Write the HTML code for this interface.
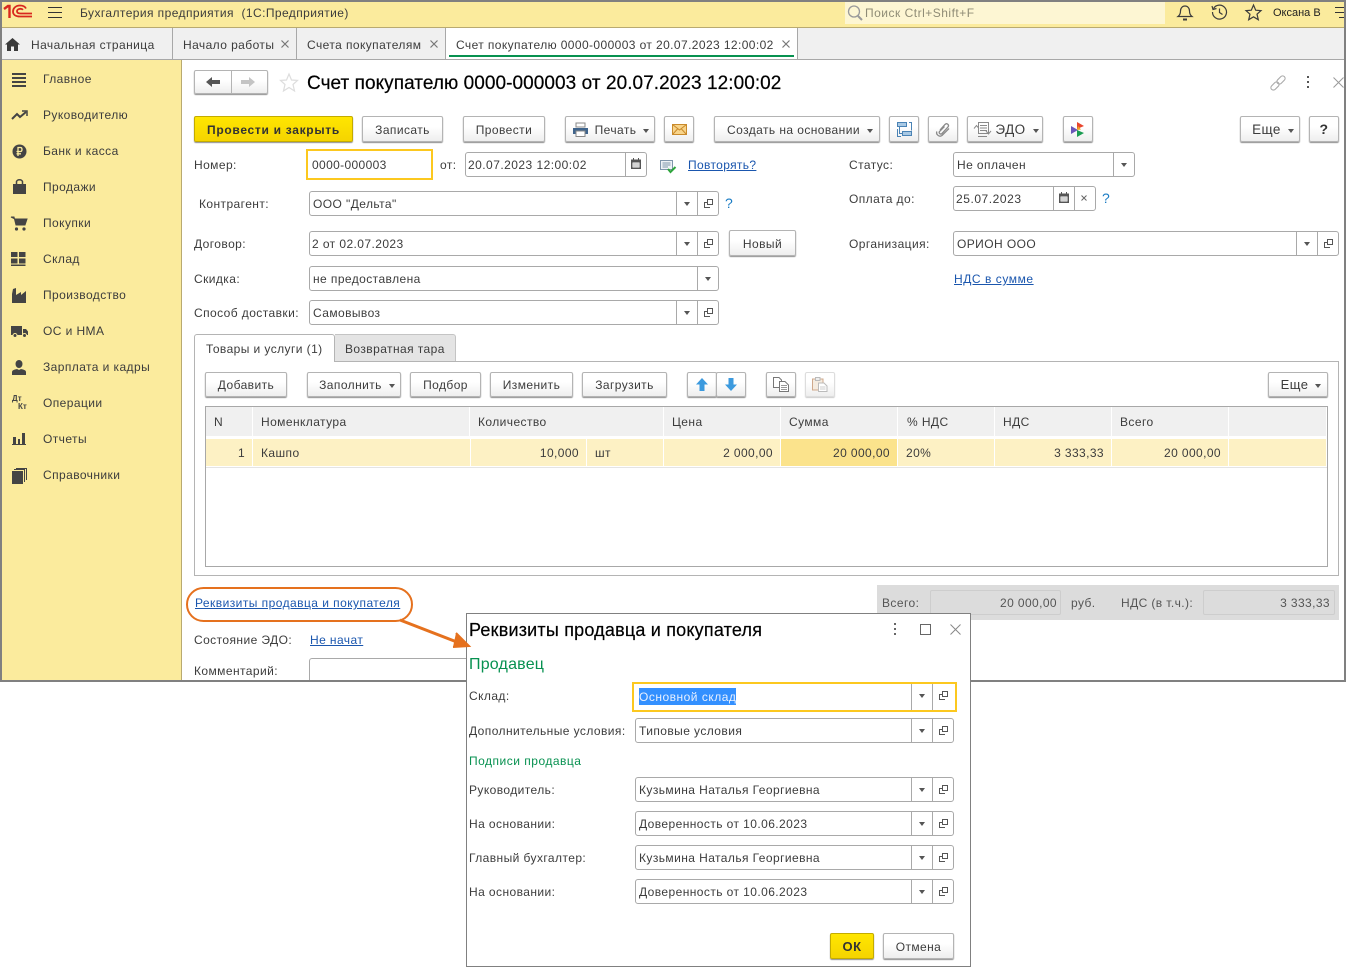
<!DOCTYPE html>
<html lang="ru"><head><meta charset="utf-8"><title>Счет покупателю</title>
<style>
html,body{margin:0;padding:0;background:#fff;width:1346px;height:969px;overflow:hidden}
body{position:relative;font:12px/16px "Liberation Sans",sans-serif;color:#3c3c3c}
.r{position:absolute}
.t{position:absolute;white-space:nowrap;font:12px/16px "Liberation Sans",sans-serif;letter-spacing:.42px;color:#3c3c3c}
.n{letter-spacing:.4px}
.l{color:#1a56ae;text-decoration:underline}
.g{color:#079150}
.b{position:absolute;box-sizing:border-box;border:1px solid #b4b4b4;border-radius:2px;background:linear-gradient(#fff,#fff 40%,#eee);box-shadow:0 1px 1px #8f8f8f;text-align:center;white-space:nowrap;font:12px/24px "Liberation Sans",sans-serif;letter-spacing:.42px;color:#3c3c3c}
.b26{line-height:26px}
.y{background:linear-gradient(#ffe600,#f5d400);border-color:#c3ab00;box-shadow:0 1px 1px #8f8f8f;font-weight:bold;color:#333}
.c::after{content:"";display:inline-block;margin-left:7px;vertical-align:1px;border:3.5px solid transparent;border-top:4px solid #555;border-bottom:0}
.f{position:absolute;box-sizing:border-box;border:1px solid #a9a9a9;border-radius:3px;background:#fff;font:12px/25px "Liberation Sans",sans-serif;letter-spacing:.42px;color:#3c3c3c;padding-left:3px;white-space:nowrap}
.fy{border:2px solid #fcc81f;border-radius:0}
.dd,.op,.ca,.cl{position:absolute;top:0;bottom:0;width:20px;border-left:1px solid #a9a9a9}
.dd{right:21px}.dd.e{right:0}.op{right:0}
.dd::after{content:"";position:absolute;left:7px;top:10px;border:3px solid transparent;border-top:4px solid #555;border-bottom:0}
.op::before{content:"";position:absolute;left:9px;top:7px;width:4px;height:4px;border:1px solid #555}
.op::after{content:"";position:absolute;left:6px;top:10px;width:5px;height:5px;border-left:1px solid #555;border-bottom:1px solid #555;background:linear-gradient(#555,#555) 0 0/3px 1px no-repeat}
.h{position:absolute;top:407px;height:29px;background:#f0f0f0}
.d{position:absolute;top:439px;height:27px;background:#fdf1c4}
.tr{text-align:right}
svg{position:absolute;overflow:visible}
</style></head><body>

<!-- window frame -->
<div class="r" style="left:0;top:0;width:1346px;height:682px;box-sizing:border-box;border:2px solid #808080;border-right-width:2px;background:#fff"></div>
<div class="r" style="left:2px;top:2px;width:1342px;height:25px;background:#fbeb9d"></div>
<div class="r" style="left:2px;top:27px;width:1342px;height:1px;background:#b9aa70"></div>
<div class="r" style="left:2px;top:28px;width:1342px;height:31px;background:#f0f0f0"></div>
<div class="r" style="left:2px;top:59px;width:1342px;height:1px;background:#a8a8a8"></div>
<div class="r" style="left:2px;top:60px;width:179px;height:620px;background:#fbeb9d"></div>
<div class="r" style="left:181px;top:60px;width:1px;height:620px;background:#b9aa70"></div>

<!-- header -->
<svg style="left:3px;top:4px" width="30" height="16" viewBox="0 0 30 16" fill="none" stroke="#d8281f">
<path d="M1 5 5 2H6.500V14" stroke-width="2.400"/>
<path d="M29 12.500H17C12.500 12.500 10 10.500 10 7.500S12.500 1.500 17 1.500C20 1.500 22 2.500 23 4.500" stroke-width="1.800"/>
<path d="M29 9.500H17.500C15.500 9.500 14 8.800 14 7.300S15.500 4.800 17.500 4.800C18.500 4.800 19.300 5 20 5.800" stroke-width="1.800"/>
</svg>
<svg style="left:48px;top:6px" width="15" height="13" fill="none" stroke="#333"><path d="M0 1.500H14M0 6.500H14M0 11.500H14"/></svg>
<div class="t" style="left:80px;top:5px">Бухгалтерия предприятия&nbsp; (1С:Предприятие)</div>
<div class="r" style="left:845px;top:2px;width:320px;height:22px;background:#fdf6d3"></div>
<svg style="left:847px;top:5px" width="16" height="16" fill="none" stroke="#9a9a9a" stroke-width="1.300"><circle cx="7" cy="6.500" r="5.500"/><path d="M11 11l4 4" stroke-width="2"/></svg>
<div class="t" style="left:865px;top:5px;color:#8f8c76;letter-spacing:.5px">Поиск Ctrl+Shift+F</div>
<svg style="left:1177px;top:4px" width="16" height="17" fill="none" stroke="#3c3c3c" stroke-width="1.200"><path d="M1 12.500C3 11 3.500 9 3.500 7C3.500 4 5.500 2 8 2S12.500 4 12.500 7C12.500 9 13 11 15 12.500Z"/><path d="M6 15.500H10" stroke-width="2"/></svg>
<svg style="left:1211px;top:4px" width="17" height="17" fill="none" stroke="#3c3c3c" stroke-width="1.200"><path d="M2.500 4.500A7 7 0 1 1 1.500 8"/><path d="M1 2 2 5.500 5.500 4.500"/><path d="M8.500 4.500V8.500L11.500 10.500"/></svg>
<svg style="left:1245px;top:4px" width="17" height="17" fill="none" stroke="#3c3c3c" stroke-width="1.200"><path d="M8.500 1 10.700 6.200 16 6.600 12 10.200 13.300 15.700 8.500 12.800 3.700 15.700 5 10.200 1 6.600 6.300 6.200Z"/></svg>
<div class="t" style="left:1273px;top:5px;font-size:11px;color:#222;letter-spacing:0">Оксана В</div>
<svg style="left:1335px;top:6px" width="10" height="14" fill="none" stroke="#333"><path d="M0 1.500H9M0 6.500H9M4 11.500H9"/></svg>

<!-- section tabs -->
<svg style="left:5px;top:38px" width="15" height="13"><path d="M7.500 0 15 6.500H13V13H9V8.500H6V13H2V6.500H0Z" fill="#3a3a3a"/></svg>
<div class="t" style="left:31px;top:37px">Начальная страница</div>
<div class="r" style="left:172px;top:28px;width:1px;height:31px;background:#a8a8a8"></div>
<div class="t" style="left:183px;top:37px">Начало работы</div>
<svg style="left:281px;top:40px" width="8" height="8" fill="none" stroke="#777" stroke-width="1.200"><path d="M.5.500l7 7M7.500.500l-7 7"/></svg>
<div class="r" style="left:296px;top:28px;width:1px;height:31px;background:#a8a8a8"></div>
<div class="t" style="left:307px;top:37px">Счета покупателям</div>
<svg style="left:430px;top:40px" width="8" height="8" fill="none" stroke="#777" stroke-width="1.200"><path d="M.5.500l7 7M7.500.500l-7 7"/></svg>
<div class="r" style="left:445px;top:28px;width:353px;height:31px;box-sizing:border-box;border-left:1px solid #a8a8a8;border-right:1px solid #a8a8a8;background:#fff"></div>
<div class="r" style="left:449px;top:55px;width:345px;height:2px;background:#079150"></div>
<div class="t" style="left:456px;top:37px;letter-spacing:.4px">Счет покупателю 0000-000003 от 20.07.2023 12:00:02</div>
<svg style="left:782px;top:40px" width="8" height="8" fill="none" stroke="#777" stroke-width="1.200"><path d="M.5.500l7 7M7.500.500l-7 7"/></svg>

<!-- sidebar -->
<svg style="left:12px;top:73px" width="15" height="14" fill="#444"><path d="M0 0h14v2H0zM0 4h14v2H0zM0 8h14v2H0zM0 12h14v2H0z"/></svg>
<div class="t" style="left:43px;top:71px">Главное</div>
<svg style="left:11px;top:110px" width="17" height="10" fill="none" stroke="#444" stroke-width="2"><path d="M1 9 6 4 9 7 15 2"/><path d="M11 1H16V6" stroke-width="1.500"/></svg>
<div class="t" style="left:43px;top:107px">Руководителю</div>
<svg style="left:12px;top:144px" width="15" height="15"><circle cx="7.500" cy="7.500" r="7" fill="#444"/><path d="M6 12V3.500H8.500C10.500 3.500 10.500 7.500 8.500 7.500H4.500M4.500 9.800H9" stroke="#fbeb9d" stroke-width="1.300" fill="none"/></svg>
<div class="t" style="left:43px;top:143px">Банк и касса</div>
<svg style="left:13px;top:179px" width="13" height="15"><path d="M0 5H13V15H0Z" fill="#444"/><path d="M3.500 8V3C3.500 0 9.500 0 9.500 3V8" fill="none" stroke="#444" stroke-width="1.500"/></svg>
<div class="t" style="left:43px;top:179px">Продажи</div>
<svg style="left:11px;top:216px" width="17" height="15"><path d="M0 1H3L5 9H14L16 3H4Z" fill="#444" stroke="#444"/><circle cx="5.500" cy="13" r="1.600" fill="#444"/><circle cx="13" cy="13" r="1.600" fill="#444"/></svg>
<div class="t" style="left:43px;top:215px">Покупки</div>
<svg style="left:11px;top:252px" width="15" height="14" fill="#444"><path d="M0 0h6.500v5H0zM8 0h6.500v5H8zM0 6.500h6.500v5H0zM8 6.500h6.500v5H8zM0 12.500h14.500V14H0z"/></svg>
<div class="t" style="left:43px;top:251px">Склад</div>
<svg style="left:12px;top:288px" width="15" height="15" fill="#444"><path d="M1 1 4 0V7L9 4V7L14 3V15H0V6Z"/></svg>
<div class="t" style="left:43px;top:287px">Производство</div>
<svg style="left:11px;top:325px" width="17" height="13" fill="#444"><path d="M0 1H11V10H0ZM12 4H15L17 6.500V10H12Z"/><circle cx="4" cy="10.500" r="2" stroke="#fbeb9d"/><circle cx="13.500" cy="10.500" r="2" stroke="#fbeb9d"/></svg>
<div class="t" style="left:43px;top:323px">ОС и НМА</div>
<svg style="left:12px;top:360px" width="14" height="15" fill="#444"><ellipse cx="7" cy="4" rx="3.500" ry="4"/><path d="M0 15V12C0 10 3 9.500 5 9L7 10 9 9C11 9.500 14 10 14 12V15Z"/></svg>
<div class="t" style="left:43px;top:359px">Зарплата и кадры</div>
<div class="t" style="left:12px;top:394px;font:bold 8px/10px 'Liberation Sans',sans-serif;color:#444;letter-spacing:0">Дт</div>
<div class="t" style="left:18px;top:402px;font:bold 8px/10px 'Liberation Sans',sans-serif;color:#444;letter-spacing:0">Кт</div>
<div class="t" style="left:43px;top:395px">Операции</div>
<svg style="left:12px;top:433px" width="14" height="12" fill="#444"><path d="M1 4H4V11H1ZM6 6H8V11H6ZM10 0H13V11H10ZM0 11H14V12H0Z"/></svg>
<div class="t" style="left:43px;top:431px">Отчеты</div>
<svg style="left:12px;top:468px" width="15" height="16"><path d="M0 3H11V16H0Z" fill="#444"/><path d="M2 1.500H12.500V14M4 .5H14.500V12" fill="none" stroke="#444"/></svg>
<div class="t" style="left:43px;top:467px">Справочники</div>

<!-- title row -->
<div class="b" style="left:194px;top:70px;width:74px;height:24px"></div>
<div class="r" style="left:231px;top:71px;width:1px;height:22px;background:#b4b4b4"></div>
<svg style="left:206px;top:77px" width="15" height="10" fill="#555"><path d="M0 5 6 0V3H14V7H6V10Z"/></svg>
<svg style="left:241px;top:77px" width="15" height="10" fill="#c4c4c4"><path d="M14 5 8 0V3H0V7H8V10Z"/></svg>
<svg style="left:280px;top:73px" width="18" height="19" fill="none" stroke="#ddd" stroke-width="1.200"><path d="M9 1 11.500 7 17.500 7.400 13 11.500 14.500 18 9 14.500 3.500 18 5 11.500 .5 7.400 6.500 7Z"/></svg>
<div class="t" style="left:307px;top:72px;font-size:19px;line-height:23px;color:#000;letter-spacing:.06px;-webkit-text-stroke:.2px #000">Счет покупателю 0000-000003 от 20.07.2023 12:00:02</div>
<svg style="left:1270px;top:75px" width="16" height="16" fill="none" stroke="#aaa" stroke-width="1.100"><g transform="rotate(-45 8 8)"><rect x="-1" y="5.500" width="9.500" height="5" rx="2.500"/><rect x="7.500" y="5.500" width="9.500" height="5" rx="2.500"/></g></svg>
<svg style="left:1306px;top:76px" width="4" height="13" fill="#555"><path d="M1 0h2v2H1zM1 5h2v2H1zM1 10h2v2H1z"/></svg>
<svg style="left:1333px;top:77px" width="11" height="11" fill="none" stroke="#999"><path d="M.5.500l10 10M10.500.500l-10 10"/></svg>

<!-- command bar -->
<div class="b y b26" style="left:194px;top:116px;width:159px;height:26px;letter-spacing:.7px">Провести и закрыть</div>
<div class="b b26" style="left:362px;top:116px;width:81px;height:26px">Записать</div>
<div class="b b26" style="left:463px;top:116px;width:82px;height:26px">Провести</div>
<div class="b c b26" style="left:565px;top:116px;width:90px;height:26px;padding-left:24px">Печать</div>
<svg style="left:573px;top:123px" width="15" height="14"><path d="M3 0H12V4H3Z" fill="#fff" stroke="#888"/><path d="M0 5H15V11H0Z" fill="#3f648c"/><path d="M3 8H12V13.500H3Z" fill="#fff" stroke="#888"/></svg>
<div class="b" style="left:664px;top:116px;width:30px;height:26px"></div>
<svg style="left:672px;top:124px" width="15" height="11"><path d="M.5.500H14.500V10.500H.5Z" fill="#f8d48a" stroke="#c98a2c"/><path d="M.5.500 7.500 6 14.500.500M.5 10.500 5.500 5M14.500 10.500 9.500 5" fill="none" stroke="#c98a2c"/></svg>
<div class="b c b26" style="left:714px;top:116px;width:166px;height:26px;padding-left:6px">Создать на основании</div>
<div class="b" style="left:889px;top:116px;width:30px;height:26px"></div>
<svg style="left:897px;top:122px" width="15" height="15" fill="none" stroke="#4a83b5"><path d="M.5.500H9.500V4.500H.5Z" fill="#a9c9e4"/><path d="M5.500 9.500H14.500V13.500H5.500Z" fill="#a9c9e4"/><path d="M2.500 5V11.500H5M12 .5H14.500V8.500M.5 7V14.500H4"/></svg>
<div class="b" style="left:928px;top:116px;width:30px;height:26px"></div>
<svg style="left:936px;top:122px" width="14" height="15" fill="none" stroke="#8a8a8a" stroke-width="1.300"><path d="M4 8 9 2.500C11 .5 13.500 3 12 5L6 11.500C4.500 13 2.500 11 3.500 9.500L8.500 4.500M1 9.500C-.5 12 3 15.500 6 13.500L13 6.500"/></svg>
<div class="b c b26" style="left:967px;top:116px;width:76px;height:26px;padding-left:24px;font-size:13.500px">ЭДО</div>
<svg style="left:974px;top:122px" width="17" height="15" fill="none" stroke="#8a8a8a"><path d="M4.500 .5H14.500V11.500H4.500ZM6 3.500H13M6 6H13M6 8.500H13M4 14.500H13"/><path d="M0 6.500 2.500 3.500 5 6.500M12 9 14.500 12 17 9" stroke="#8a8a8a"/></svg>
<div class="b" style="left:1063px;top:116px;width:30px;height:26px"></div>
<svg style="left:1071px;top:122px" width="14" height="15"><path d="M0 4 7 8 0 12Z" fill="#6b56b8"/><path d="M6 0 13 4 6 7Z" fill="#e9452d"/><path d="M6 8 13 11 6 15Z" fill="#1a9c52"/><path d="M7 4 10 7.500 6 8Z" fill="#f0a21f"/></svg>
<div class="b c b26" style="left:1240px;top:116px;width:60px;height:26px;font-size:13.500px;padding-left:6px">Еще</div>
<div class="b" style="left:1309px;top:116px;width:30px;height:26px;font:bold 14px/24px 'Liberation Sans',sans-serif;color:#333">?</div>

<!-- form -->
<div class="t" style="left:194px;top:157px">Номер:</div>
<div class="f fy" style="left:306px;top:149px;width:127px;height:31px;line-height:28px;padding-left:4px;letter-spacing:.36px">0000-000003</div>
<div class="t" style="left:440px;top:157px">от:</div>
<div class="f" style="left:465px;top:152px;width:182px;height:25px;padding-left:2px;letter-spacing:.46px">20.07.2023 12:00:02<i class="ca" style="right:0"></i></div>
<svg style="left:631px;top:158px" width="10" height="11"><path d="M0 1.500H10V11H0Z" fill="#555"/><path d="M1.500 4.500H8.500V9.500H1.500Z" fill="#fff"/><path d="M2.500 5.500h1v1h-1zM4.500 5.500h1v1h-1zM6.500 5.500h1v1h-1zM2.500 7.500h1v1h-1zM4.500 7.500h1v1h-1zM6.500 7.500h1v1h-1z" fill="#555"/><path d="M2 0h1v2H2zM7 0h1v2H7z" fill="#555"/></svg>
<svg style="left:660px;top:160px" width="16" height="13"><path d="M.5.500H12.500V9.500H.5Z" fill="#eef2f6" stroke="#7f95ab"/><path d="M2.500 3H10.500M2.500 5H10.500M2.500 7H8" stroke="#7f95ab"/><path d="M8 9 10.500 12 15.500 7" fill="none" stroke="#2ea43c" stroke-width="2"/></svg>
<div class="t l" style="left:688px;top:157px;letter-spacing:.35px">Повторять?</div>
<div class="t" style="left:849px;top:157px">Статус:</div>
<div class="f" style="left:953px;top:152px;width:182px;height:25px">Не оплачен<i class="dd e"></i></div>

<div class="t" style="left:199px;top:196px">Контрагент:</div>
<div class="f" style="left:309px;top:191px;width:410px;height:25px">ООО "Дельта"<i class="dd"></i><i class="op"></i></div>
<div class="t" style="left:725px;top:195px;font-size:14px;color:#1a7cc4">?</div>
<div class="t" style="left:849px;top:191px">Оплата до:</div>
<div class="f" style="left:953px;top:186px;width:143px;height:25px;padding-left:2px;letter-spacing:.55px">25.07.2023<i class="ca" style="right:21px"></i><i class="cl" style="right:0"></i></div>
<svg style="left:1059px;top:192px" width="10" height="11"><path d="M0 1.500H10V11H0Z" fill="#555"/><path d="M1.500 4.500H8.500V9.500H1.500Z" fill="#fff"/><path d="M2.500 5.500h1v1h-1zM4.500 5.500h1v1h-1zM6.500 5.500h1v1h-1zM2.500 7.500h1v1h-1zM4.500 7.500h1v1h-1zM6.500 7.500h1v1h-1z" fill="#555"/><path d="M2 0h1v2H2zM7 0h1v2H7z" fill="#555"/></svg>
<svg style="left:1081px;top:195px" width="6" height="6" fill="none" stroke="#666"><path d="M.5.500l5 5M5.500.500l-5 5"/></svg>
<div class="t" style="left:1102px;top:190px;font-size:14px;color:#1a7cc4">?</div>

<div class="t" style="left:194px;top:236px">Договор:</div>
<div class="f" style="left:309px;top:231px;width:410px;height:25px;padding-left:2px">2 от 02.07.2023<i class="dd"></i><i class="op"></i></div>
<div class="b b26" style="left:729px;top:230px;width:67px;height:26px">Новый</div>
<div class="t" style="left:849px;top:236px">Организация:</div>
<div class="f" style="left:953px;top:231px;width:386px;height:25px">ОРИОН ООО<i class="dd"></i><i class="op"></i></div>
<div class="t l" style="left:954px;top:271px;letter-spacing:.55px">НДС в сумме</div>
<div class="t" style="left:194px;top:271px">Скидка:</div>
<div class="f" style="left:309px;top:266px;width:410px;height:25px">не предоставлена<i class="dd e"></i></div>
<div class="t" style="left:194px;top:305px">Способ доставки:</div>
<div class="f" style="left:309px;top:300px;width:410px;height:25px">Самовывоз<i class="dd"></i><i class="op"></i></div>

<!-- tabs panel -->
<div class="r" style="left:194px;top:361px;width:1145px;height:215px;box-sizing:border-box;border:1px solid #b4b4b4;background:#fff"></div>
<div class="r" style="left:194px;top:334px;width:141px;height:28px;box-sizing:border-box;border:1px solid #b4b4b4;border-bottom:0;border-radius:3px 3px 0 0;background:#fff"></div>
<div class="r" style="left:335px;top:334px;width:121px;height:27px;box-sizing:border-box;border:1px solid #c4c4c4;border-bottom:0;border-left:0;border-radius:0 3px 0 0;background:#e4e4e4"></div>
<div class="t" style="left:206px;top:341px">Товары и услуги (1)</div>
<div class="t" style="left:345px;top:341px">Возвратная тара</div>

<div class="b" style="left:205px;top:372px;width:82px;height:25px">Добавить</div>
<div class="b c" style="left:307px;top:372px;width:94px;height:25px;padding-left:6px">Заполнить</div>
<div class="b" style="left:410px;top:372px;width:71px;height:25px">Подбор</div>
<div class="b" style="left:490px;top:372px;width:83px;height:25px">Изменить</div>
<div class="b" style="left:582px;top:372px;width:85px;height:25px">Загрузить</div>
<div class="b" style="left:687px;top:372px;width:30px;height:25px"></div>
<div class="b" style="left:716px;top:372px;width:30px;height:25px"></div>
<svg style="left:696px;top:378px" width="12" height="13"><path d="M6 0 12 6.500H8.500V13H3.500V6.500H0Z" fill="#3c9ade"/></svg>
<svg style="left:725px;top:378px" width="12" height="13"><path d="M6 13 12 6.500H8.500V0H3.500V6.500H0Z" fill="#3c9ade"/></svg>
<div class="b" style="left:766px;top:372px;width:30px;height:25px"></div>
<svg style="left:773px;top:377px" width="16" height="15"><path d="M.5.500H6L8.500 3V10.500H.5Z" fill="#fff" stroke="#777"/><path d="M6.500 4.500H12L15.500 8V14.500H6.500Z" fill="#fff" stroke="#777"/><path d="M8 8.500H14M8 10.500H14M8 12.500H14" stroke="#999"/></svg>
<div class="b" style="left:805px;top:372px;width:30px;height:25px;border-color:#ddd;box-shadow:0 1px 1px #ccc"></div>
<svg style="left:812px;top:377px" width="16" height="15"><path d="M.5 2H11V13H.5Z" fill="#f5ece0" stroke="#cfa98c"/><path d="M3.500.5H8V3.500H3.500Z" fill="#eee" stroke="#bbb"/><path d="M6.500 6H12L15 9V14.500H6.500Z" fill="#fff" stroke="#bbb"/><path d="M8 10H13.500M8 12H13.500" stroke="#ccc"/></svg>
<div class="b c" style="left:1268px;top:372px;width:60px;height:25px;font-size:13px;padding-left:6px">Еще</div>

<!-- table -->
<div class="r" style="left:205px;top:406px;width:1123px;height:161px;box-sizing:border-box;border:1px solid #a8a8a8;background:#fff"></div>
<div class="h" style="left:206px;width:46px"></div>
<div class="h" style="left:253px;width:216px"></div>
<div class="h" style="left:470px;width:193px"></div>
<div class="h" style="left:664px;width:116px"></div>
<div class="h" style="left:781px;width:116px"></div>
<div class="h" style="left:898px;width:96px"></div>
<div class="h" style="left:995px;width:116px"></div>
<div class="h" style="left:1112px;width:116px"></div>
<div class="h" style="left:1229px;width:97px"></div>
<div class="d" style="left:206px;width:46px"></div>
<div class="d" style="left:253px;width:217px"></div>
<div class="d" style="left:471px;width:115px"></div>
<div class="d" style="left:587px;width:76px"></div>
<div class="d" style="left:664px;width:116px"></div>
<div class="d" style="left:781px;width:116px;background:#fbe38c"></div>
<div class="d" style="left:898px;width:96px"></div>
<div class="d" style="left:995px;width:116px"></div>
<div class="d" style="left:1112px;width:116px"></div>
<div class="d" style="left:1229px;width:97px"></div>
<div class="r" style="left:206px;top:467px;width:1121px;height:1px;background:#e4e4e4"></div>
<div class="t" style="left:214px;top:414px">N</div>
<div class="t" style="left:261px;top:414px">Номенклатура</div>
<div class="t" style="left:478px;top:414px">Количество</div>
<div class="t" style="left:672px;top:414px">Цена</div>
<div class="t" style="left:789px;top:414px">Сумма</div>
<div class="t" style="left:907px;top:414px">% НДС</div>
<div class="t" style="left:1003px;top:414px">НДС</div>
<div class="t" style="left:1120px;top:414px">Всего</div>
<div class="t" style="left:238px;top:445px">1</div>
<div class="t" style="left:261px;top:445px">Кашпо</div>
<div class="t n tr" style="left:480px;top:445px;width:99px">10,000</div>
<div class="t" style="left:595px;top:445px">шт</div>
<div class="t n tr" style="left:673px;top:445px;width:100px">2 000,00</div>
<div class="t n tr" style="left:790px;top:445px;width:100px">20 000,00</div>
<div class="t n" style="left:906px;top:445px">20%</div>
<div class="t n tr" style="left:1004px;top:445px;width:100px">3 333,33</div>
<div class="t n tr" style="left:1121px;top:445px;width:100px">20 000,00</div>

<!-- bottom of main form -->
<div class="r" style="left:877px;top:585px;width:462px;height:35px;background:#dcdcdc"></div>
<div class="r" style="left:930px;top:590px;width:131px;height:25px;box-sizing:border-box;border:1px solid #cdcdcd;border-radius:2px"></div>
<div class="r" style="left:1203px;top:590px;width:132px;height:25px;box-sizing:border-box;border:1px solid #cdcdcd;border-radius:2px"></div>
<div class="t" style="left:882px;top:595px;color:#555">Всего:</div>
<div class="t n tr" style="left:960px;top:595px;width:97px;color:#555">20 000,00</div>
<div class="t" style="left:1071px;top:595px;color:#555">руб.</div>
<div class="t n" style="left:1121px;top:595px;color:#555">НДС (в т.ч.):</div>
<div class="t n tr" style="left:1233px;top:595px;width:97px;color:#555">3 333,33</div>

<div class="t l" style="left:195px;top:595px;letter-spacing:.45px">Реквизиты продавца и покупателя</div>
<div class="t" style="left:194px;top:632px">Состояние ЭДО:</div>
<div class="t l" style="left:310px;top:632px">Не начат</div>
<div class="t" style="left:194px;top:663px">Комментарий:</div>
<div class="r" style="left:309px;top:658px;width:170px;height:22px;box-sizing:border-box;border:1px solid #a9a9a9;border-bottom:0;border-radius:3px 0 0 0"></div>

<!-- popup -->
<div class="r" style="left:466px;top:613px;width:505px;height:354px;box-sizing:border-box;border:1px solid #808080;background:#fff"></div>
<div class="t" style="left:469px;top:620px;font-size:18px;line-height:21px;color:#000;letter-spacing:.2px;-webkit-text-stroke:.2px #000">Реквизиты продавца и покупателя</div>
<svg style="left:893px;top:623px" width="4" height="13" fill="#666"><path d="M1 0h2v2H1zM1 5h2v2H1zM1 10h2v2H1z"/></svg>
<svg style="left:920px;top:624px" width="11" height="11" fill="none" stroke="#666"><path d="M.5.500H10.500V10.500H.5Z"/></svg>
<svg style="left:950px;top:624px" width="11" height="11" fill="none" stroke="#888"><path d="M.5.500l10 10M10.500.500l-10 10"/></svg>
<div class="t g" style="left:469px;top:656px;font-size:16px;line-height:18px;letter-spacing:.2px">Продавец</div>
<div class="t" style="left:469px;top:688px">Склад:</div>
<div class="f fy" style="left:632px;top:682px;width:325px;height:30px;line-height:26px"><span style="position:absolute;left:5px;top:4px;height:17px;line-height:19px;background:#3390ff;color:#e8f0ff;letter-spacing:.5px">Основной склад</span><i class="dd" style="right:23px;width:20px"></i><i class="op" style="width:22px"></i></div>
<div class="t" style="left:469px;top:723px">Дополнительные условия:</div>
<div class="f" style="left:635px;top:718px;width:319px;height:25px">Типовые условия<i class="dd"></i><i class="op"></i></div>
<div class="t g" style="left:469px;top:753px;letter-spacing:.5px">Подписи продавца</div>
<div class="t" style="left:469px;top:782px">Руководитель:</div>
<div class="f" style="left:635px;top:777px;width:319px;height:25px">Кузьмина Наталья Георгиевна<i class="dd"></i><i class="op"></i></div>
<div class="t" style="left:469px;top:816px">На основании:</div>
<div class="f" style="left:635px;top:811px;width:319px;height:25px">Доверенность от 10.06.2023<i class="dd"></i><i class="op"></i></div>
<div class="t" style="left:469px;top:850px">Главный бухгалтер:</div>
<div class="f" style="left:635px;top:845px;width:319px;height:25px">Кузьмина Наталья Георгиевна<i class="dd"></i><i class="op"></i></div>
<div class="t" style="left:469px;top:884px">На основании:</div>
<div class="f" style="left:635px;top:879px;width:319px;height:25px">Доверенность от 10.06.2023<i class="dd"></i><i class="op"></i></div>
<div class="b y b26" style="left:830px;top:933px;width:44px;height:26px;font-size:13px">ОК</div>
<div class="b b26" style="left:883px;top:933px;width:71px;height:26px">Отмена</div>

<!-- annotation -->
<svg style="left:0;top:0" width="1346" height="969" fill="none">
<rect x="187" y="588" width="225" height="33" rx="16.500" stroke="#e5711e" stroke-width="2"/>
<path d="M400 620 462 644" stroke="#e5711e" stroke-width="3"/>
<path d="M456 633 469 646 453 647" stroke="#e5711e" stroke-width="2" fill="#e5711e"/>
</svg>
</body></html>
